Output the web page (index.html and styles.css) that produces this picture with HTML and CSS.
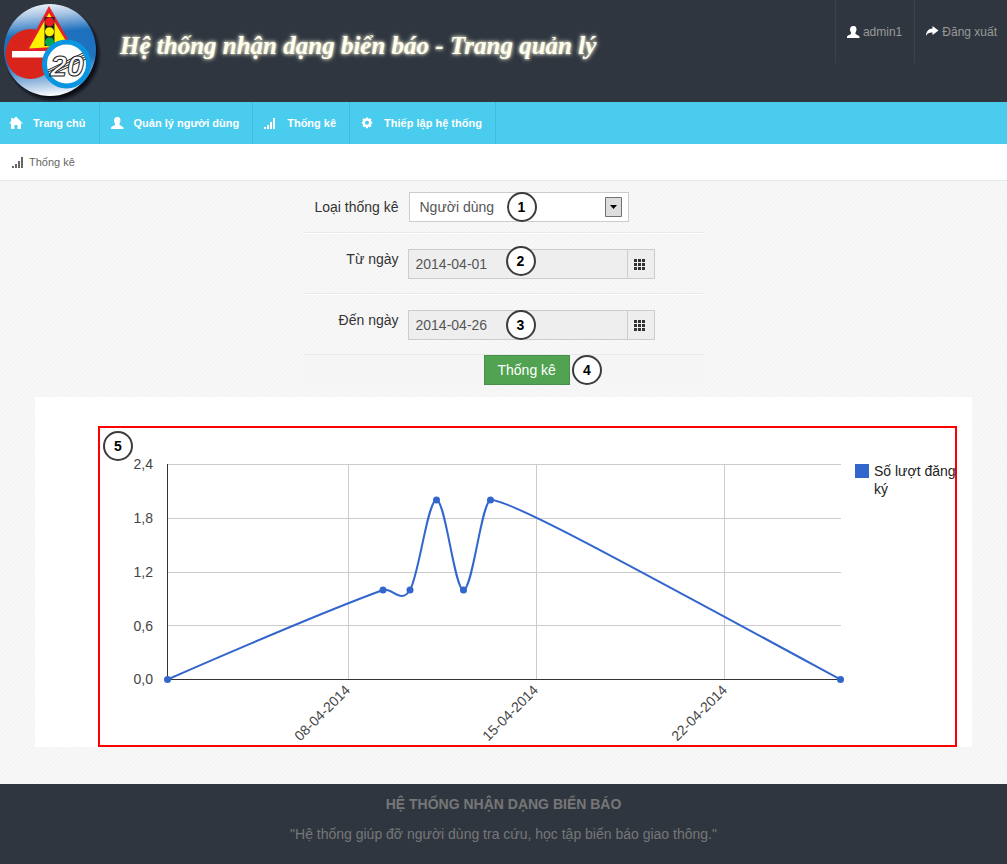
FILE: index.html
```html
<!DOCTYPE html>
<html lang="vi">
<head>
<meta charset="utf-8">
<meta name="viewport" content="width=device-width, initial-scale=1">
<title>Hệ thống nhận dạng biển báo - Trang quản lý</title>
<link rel="stylesheet" href="styles.css">
</head>
<body>
<svg class="sprite" aria-hidden="true">
  <symbol id="i-user" viewBox="0 0 14 14"><path d="M7 1h1c1.700.200 2.500 1.500 2.500 3.300 0 1.200-.4 2.300-1 3V9c1.500 1 4 1.300 4 3.300V13H1v-.7c0-2 2.500-2.300 4-3.300V7.300c-.6-.7-1-1.800-1-3C4 2.500 5.300 1.200 7 1z"/></symbol>
  <symbol id="i-home" viewBox="0 0 14 14"><path d="M7 .500 14 7.500h-2V13H8.500V9h-3v4H2V7.500H0L2.200 5.300V2h2v1.300z"/></symbol>
  <symbol id="i-signal" viewBox="0 0 14 14"><path d="M1 11h2v2H1zM4 9h2v4H4zM7 6h2v7H7zM10 2h2v11h-2z"/></symbol>
  <symbol id="i-gear" viewBox="0 0 14 14"><path fill-rule="evenodd" d="M6 1.500h2l.4 1.400 1.700-.7 1.400 1.400-.7 1.700 1.400.4v2l-1.400.4.700 1.700-1.400 1.400-1.700-.7L8 12.200H6l-.4-1.700-1.700.7-1.400-1.400.7-1.700-1.400-.4v-2l1.400-.4-.7-1.700 1.400-1.400 1.700.7zM7 4.800a2 2 0 1 0 0 4 2 2 0 0 0 0-4z"/></symbol>
  <symbol id="i-share" viewBox="0 0 14 14"><path d="M7.500 1 13.500 5.500l-6 4.500V7.500C4.500 7.300 2.500 8 1 11 1 6.500 3.500 3.700 7.500 3.500z"/></symbol>
  <symbol id="i-grid" viewBox="0 0 14 14"><path d="M1 2h3v3H1zM5 2h3v3H5zM9 2h3v3H9zM1 6h3v3H1zM5 6h3v3H5zM9 6h3v3H9zM1 10h3v3H1zM5 10h3v3H5zM9 10h3v3H9z"/></symbol>
</svg>

<header class="header">
  <div class="brand">
    <svg class="logo" viewBox="0 0 102 102" role="img" aria-label="Logo">
      <defs>
        <linearGradient id="ball" x1="0.450" y1="0" x2="0.550" y2="1">
          <stop offset="0" stop-color="#e8f0f8"/><stop offset=".12" stop-color="#a9c5e4"/><stop offset=".32" stop-color="#1c70bd"/>
          <stop offset=".62" stop-color="#1e72be"/><stop offset=".85" stop-color="#a4c3e3"/><stop offset="1" stop-color="#ffffff"/>
        </linearGradient>
        <filter id="soft" x="-20%" y="-20%" width="140%" height="140%"><feGaussianBlur stdDeviation="1.500"/></filter>
      </defs>
      <circle cx="53" cy="54" r="46" fill="#0a0d12" filter="url(#soft)"/>
      <circle cx="50" cy="50" r="46" fill="url(#ball)"/>
      <circle cx="30.500" cy="54" r="25" fill="#d9241c"/>
      <path d="M12 51h36v6.500H12z" fill="#fff"/>
      <path d="M49 6 73 48 25 51z" fill="#e8202a"/>
      <path d="M49 13 69 46 29 48.500z" fill="#fff200"/>
      <rect x="44.500" y="17" width="10" height="29" fill="#231f20"/>
      <circle cx="49.500" cy="21.700" r="4.500" fill="#ed1c24"/><circle cx="49.500" cy="31.700" r="4.500" fill="#fff200"/><circle cx="49.500" cy="42" r="4.500" fill="#00a651"/>
      <circle cx="66.500" cy="64" r="22" fill="#fff" stroke="#0995e0" stroke-width="5"/>
      <path d="M48 70 83 53M48 72 84 55M49 74 85 57M49 76 86 59" stroke="#222" stroke-width="1" fill="none"/>
      <text class="logo-number" x="67" y="76">20</text>
    </svg>
    <h1 class="title">Hệ thống nhận dạng biển báo - Trang quản lý</h1>
  </div>
  <nav class="account" aria-label="Tài khoản">
    <a href="#"><svg class="icon"><use href="#i-user"/></svg>admin1</a>
    <a href="#"><svg class="icon"><use href="#i-share"/></svg>Đăng xuất</a>
  </nav>
</header>

<nav class="menu" aria-label="Menu chính">
  <a href="#"><svg class="icon"><use href="#i-home"/></svg>Trang chủ</a>
  <a href="#"><svg class="icon"><use href="#i-user"/></svg>Quản lý người dùng</a>
  <a href="#"><svg class="icon"><use href="#i-signal"/></svg>Thống kê</a>
  <a href="#"><svg class="icon"><use href="#i-gear"/></svg>Thiếp lập hệ thống</a>
</nav>

<div class="crumbs"><a href="#"><svg class="icon"><use href="#i-signal"/></svg>Thống kê</a></div>

<main class="content">
  <form class="filter">
    <div class="row row-type">
      <label for="type">Loại thống kê</label>
      <div class="select">
        <select id="type"><option>Người dùng</option></select>
        <svg class="arrow" viewBox="0 0 17 20" aria-hidden="true"><path class="arrow-box" d="M.5.5h16v19H.5z"/><path d="M5 8h7L8.500 12z"/></svg>
        <span class="badge">1</span>
      </div>
    </div>
    <div class="row">
      <label for="from">Từ ngày</label>
      <div class="date">
        <input id="from" type="text" value="2014-04-01" readonly>
        <button type="button" aria-label="Chọn ngày"><svg class="icon"><use href="#i-grid"/></svg></button>
        <span class="badge badge-from">2</span>
      </div>
    </div>
    <div class="row">
      <label for="to">Đến ngày</label>
      <div class="date">
        <input id="to" type="text" value="2014-04-26" readonly>
        <button type="button" aria-label="Chọn ngày"><svg class="icon"><use href="#i-grid"/></svg></button>
        <span class="badge">3</span>
      </div>
    </div>
    <div class="actions">
      <button class="submit" type="submit">Thống kê</button>
      <span class="badge badge-inline">4</span>
    </div>
  </form>

  <section class="panel">
    <div class="frame">
      <span class="badge badge-chart">5</span>
      <svg class="chart" viewBox="100 428 855 317" role="img" aria-label="Số lượt đăng ký">
        <path class="grid" d="M167 464.500H841M167 518.500H841M167 572.500H841M167 625.500H841M348.500 464V679M536.500 464V679M724.500 464V679"/>
        <path class="axis" d="M167.500 464V679.500H841"/>
        <path class="line" d="M167.500 679.500C167.500 679.500 311 616.300 383 590C392 586.700 401 605 410 590C419 575 427.700 500 436.500 500C445.500 500 454.500 590 463.500 590C472.500 590 481.500 502 490.500 500C508 499 607 553 840.500 679.500"/>
        <g class="dots"><circle cx="167.500" cy="679.500" r="3.500"/><circle cx="383" cy="590" r="3.500"/><circle cx="410" cy="590" r="3.500"/><circle cx="436.500" cy="500" r="3.500"/><circle cx="463.500" cy="590" r="3.500"/><circle cx="490.500" cy="500" r="3.500"/><circle cx="840.500" cy="679.500" r="3.500"/></g>
        <g class="y-labels"><text x="153" y="469">2,4</text><text x="153" y="523">1,8</text><text x="153" y="577">1,2</text><text x="153" y="631">0,6</text><text x="153" y="684">0,0</text></g>
        <g class="x-labels"><text transform="translate(351 691) rotate(-45)">08-04-2014</text><text transform="translate(539 691) rotate(-45)">15-04-2014</text><text transform="translate(728 691) rotate(-45)">22-04-2014</text></g>
        <path class="swatch" d="M855 464h14v14h-14z"/>
        <g class="legend"><text x="874" y="476">Số lượt đăng</text><text x="874" y="494">ký</text></g>
      </svg>
    </div>
  </section>
</main>

<footer class="footer">
  <strong>HỆ THỐNG NHẬN DẠNG BIỂN BÁO</strong>
  <p>"Hệ thống giúp đỡ người dùng tra cứu, học tập biển báo giao thông."</p>
</footer>
</body>
</html>
```
FILE: styles.css
```css
* { box-sizing: border-box; }
body {
  margin: 0;
  min-height: 100vh;
  display: flex;
  flex-direction: column;
  font: 14px/20px "Liberation Sans", Arial, sans-serif;
  color: #333;
  background: #f5f5f5;
}
a { color: inherit; text-decoration: none; }
.sprite { display: none; }
.icon { width: 14px; height: 14px; fill: currentColor; flex: none; }

.header { display: flex; justify-content: space-between; height: 102px; background: #2f3640; }
.brand { display: flex; align-items: flex-start; gap: 18px; }
.logo { width: 102px; height: 102px; }
.logo-number { font: italic bold 30px "Liberation Sans Narrow", "Liberation Sans", Arial, sans-serif; text-anchor: middle; fill: #fff; stroke: #222; stroke-width: 1; }
.title {
  margin: 30px 0 0;
  font: italic bold 25px/32px "Liberation Serif", "Times New Roman", serif;
  color: #fffff0;
  text-shadow: 0 0 3px #e8e6cc, 0 0 5px #e8e6cc;
  white-space: nowrap;
}
.account { display: flex; }
.account a {
  display: flex;
  align-items: center;
  gap: 3px;
  height: 63px;
  padding: 0 10px;
  border-left: 1px solid #3a424c;
  font-size: 12px;
  color: #999;
  white-space: nowrap;
}
.account a:first-child { padding-right: 12px; }
.account .icon { color: #fff; }

.menu { display: flex; height: 42px; background: #49cced; }
.menu a {
  display: flex;
  align-items: center;
  gap: 10px;
  padding: 0 13px 0 10px;
  border-right: 1px solid #3dbcdc;
  font-size: 11px;
  font-weight: bold;
  color: #fff;
  white-space: nowrap;
}
.menu a:first-child { padding-left: 9px; }

.crumbs { display: flex; height: 37px; padding: 0 11px; background: #fff; border-bottom: 1px solid #e3ebee; }
.crumbs a { display: flex; align-items: center; gap: 4px; font-size: 11px; color: #666; }

.content {
  flex: 1;
  padding: 0 35px 37px;
  background: linear-gradient(135deg, #f7f7f7 40%, #f2f2f2 50%, #f7f7f7 60%) 0 0 / 5px 5px;
}
.filter { max-width: 400px; margin: 0 auto; }
.row {
  display: flex;
  gap: 9px;
  padding: 15px 0 14px;
  border-bottom: 1px solid #e9e9e9;
  box-shadow: 0 1px #fff;
}
.row + .row { padding-top: 16px; }
.row label { width: 95px; text-align: right; }
.row-type { gap: 10px; padding: 11px 0 10px; }
.row-type label { padding-top: 5px; }
.select, .date { position: relative; display: flex; }
.select select {
  appearance: none;
  width: 220px;
  height: 30px;
  padding: 0 10px;
  border: 1px solid #ccc;
  border-radius: 0;
  background: #fff;
  color: #555;
  font: inherit;
}
.arrow { position: absolute; right: 7px; top: 5px; width: 17px; height: 20px; pointer-events: none; }
.arrow-box { fill: #ddd; stroke: #707070; }
.date input {
  width: 219px;
  height: 30px;
  padding: 0 7px;
  border: 1px solid #ccc;
  border-right: 0;
  background: #eee;
  color: #555;
  font: inherit;
}
.date button {
  display: flex;
  align-items: center;
  width: 28px;
  padding: 0 5px;
  border: 1px solid #ccc;
  background: #eee;
  color: #333;
}
.badge {
  position: absolute;
  left: 98px;
  top: 0;
  width: 30px;
  height: 30px;
  border: 2px solid #3c3c3c;
  border-radius: 50%;
  background: #fff;
  color: #000;
  font-size: 14px;
  font-weight: bold;
  line-height: 27px;
  text-align: center;
}
.badge-from { top: -3px; }
.badge-inline { position: static; }
.badge-chart { left: 3px; top: 3px; }
.actions { display: flex; gap: 2px; padding-left: 180px; background: #f5f5f5; }
.submit {
  height: 30px;
  padding: 0 13px;
  border: 1px solid #46914a;
  background: #51a351;
  color: #fff;
  font: inherit;
}

.panel { margin-top: 12px; padding: 29px 15px 0 63px; background: #fff; }
.frame { position: relative; border: 2px solid #f00; }
.chart { display: block; width: 100%; overflow: visible; font-size: 14px; }
.grid { stroke: #ccc; fill: none; }
.axis { stroke: #333; fill: none; }
.line { stroke: #36c; stroke-width: 2; fill: none; }
.dots, .swatch { fill: #36c; }
.y-labels, .x-labels { fill: #444; text-anchor: end; }
.legend { fill: #222; }

.footer { padding: 10px 20px 20px; background: #2f3640; color: #777; text-align: center; }
.footer p { margin: 10px 0 0; }
```
